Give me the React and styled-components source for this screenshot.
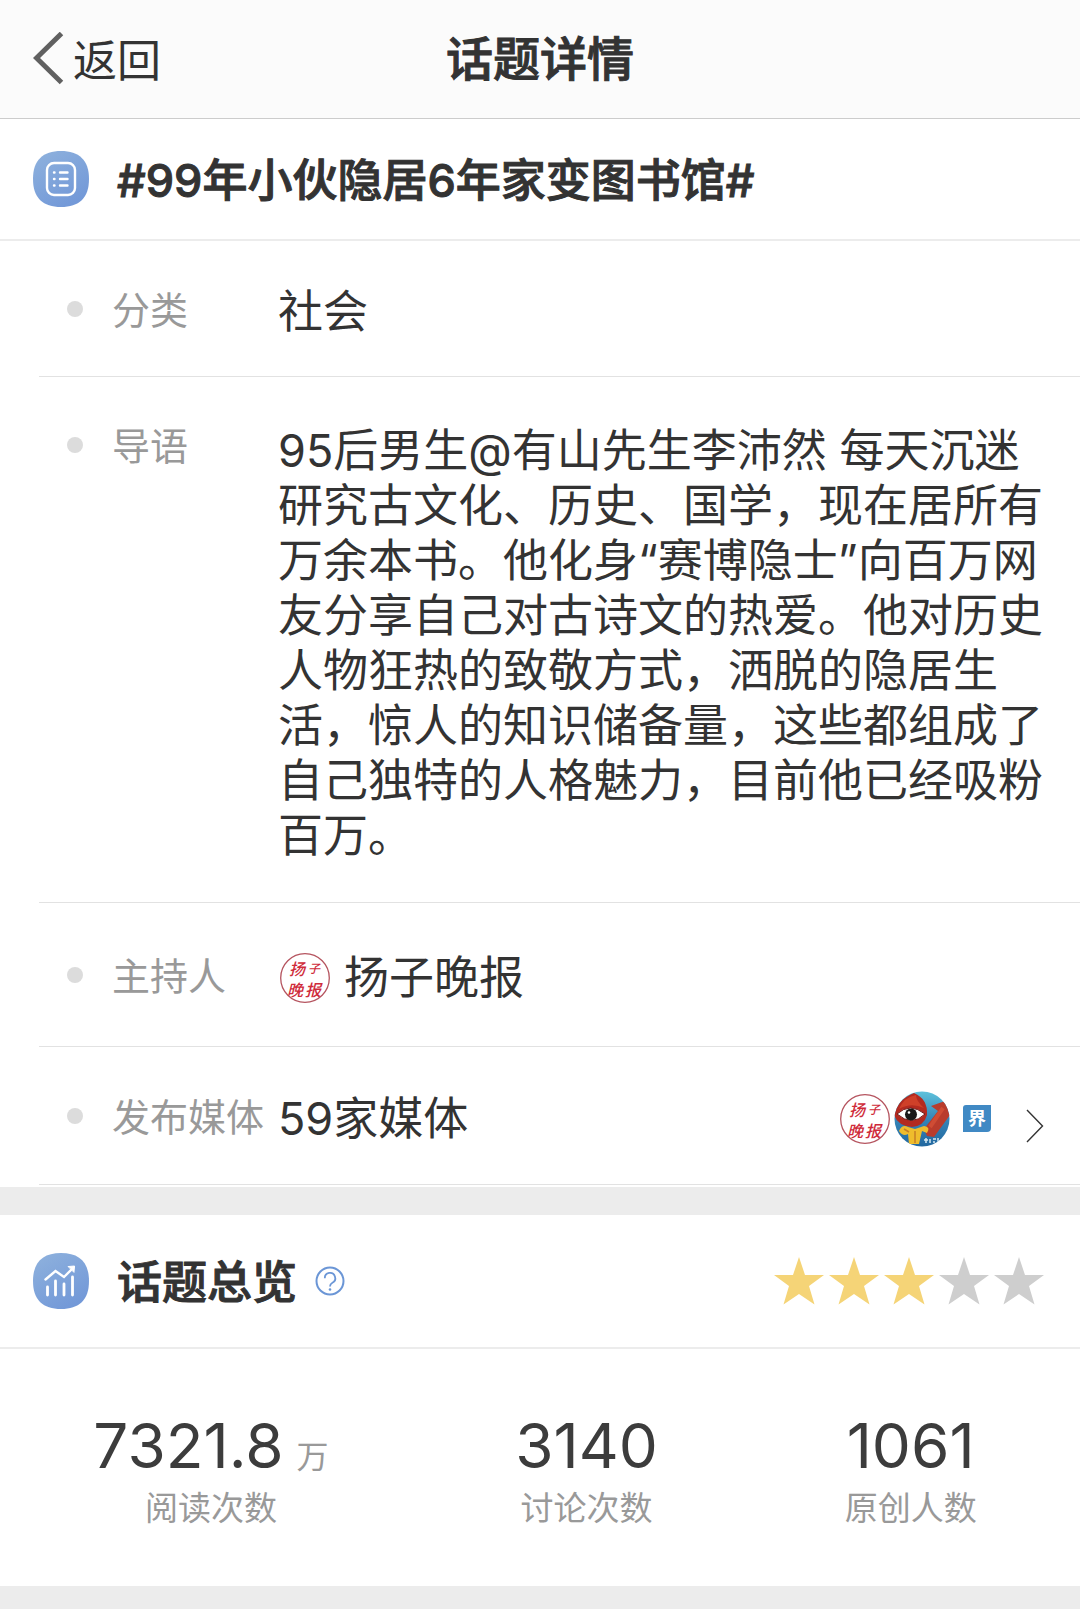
import styled, { createGlobalStyle } from "styled-components";

const GlobalStyle = createGlobalStyle`
  * {
    box-sizing: border-box;
  }
  body {
    margin: 0;
    background: #ececec;
    color: #333;
    font-family: Inter, "Noto Sans CJK SC", sans-serif;
  }
  h1, h2, dl, dt, dd, p {
    margin: 0;
    font: inherit;
  }
`;

const Header = styled.header`
  display: grid;
  grid-template-columns: 1fr auto 1fr;
  align-items: center;
  height: 119px;
  padding: 0 33px;
  background: #fbfbfb;
  border-bottom: 1px solid #ccc;
`;
const BackButton = styled.button`
  display: flex;
  align-items: center;
  justify-self: start;
  gap: 8px;
  padding: 0;
  border: none;
  background: none;
  color: #333;
  font-family: inherit;
  font-size: 44px;
  line-height: 56px;
`;
const BackText = styled.span`
  padding-top: 4px;
`;
const PageTitle = styled.h1`
  && {
    font-size: 47px;
    font-weight: 500;
    line-height: 56px;
    -webkit-text-stroke: 1px;
  }
`;

const Section = styled.section`
  padding-bottom: 2px;
  background: #fff;

  & + & {
    margin-top: 28px;
  }
`;
const SectionHead = styled.div`
  display: flex;
  align-items: center;
  gap: 28px;
  height: ${({ $tall }) => ($tall ? "134px" : "122px")};
  padding: 0 36px 0 33px;
  border-bottom: 2px solid #ececec;
`;
const TitleGroup = styled.div`
  display: flex;
  align-items: center;
  gap: 18px;
`;
const SectionTitle = styled.h2`
  && {
    padding-top: 4px;
    font-size: 45px;
    font-weight: 500;
    line-height: 56px;
    -webkit-text-stroke: 1px;
  }
`;
const HelpButton = styled.button`
  display: flex;
  padding: 0;
  border: none;
  background: none;
`;
const Stars = styled.div`
  display: flex;
  gap: 5px;
  margin-left: auto;
`;

const Row = styled.div`
  display: grid;
  grid-template-columns: 45px 166px 1fr;
  align-items: start;
  margin-left: 39px;
  padding: ${({ $space }) => `${$space + 4}px 36px ${$space}px 28px`};
  border-bottom: 1px solid #e2e2e2;
`;
const Dot = styled.span`
  width: 16px;
  height: 16px;
  margin-top: 20px;
  border-radius: 50%;
  background: #dcdcdc;
`;
const Label = styled.dt`
  && {
    color: #999;
    font-size: 38px;
    line-height: 58px;
    white-space: nowrap;
  }
`;
const Value = styled.dd`
  && {
    display: flex;
    align-items: center;
    gap: 10px;
    padding-top: 3px;
    font-size: 45px;
    line-height: 56px;
  }
`;
const Intro = styled.p`
  && {
    padding: 3px 0;
    line-height: 55px;
  }
`;
const MediaLink = styled.a`
  display: flex;
  align-items: center;
  margin-left: auto;
`;
const ArrowBox = styled.span`
  display: flex;
  margin-left: 20px;
  padding-top: 14px;
`;

const Stats = styled.dl`
  display: flex;
  justify-content: space-around;
  padding: 59px 10px 52px 0;
`;
const Stat = styled.div`
  display: flex;
  flex-direction: column-reverse;
  align-items: center;
`;
const StatName = styled.dt`
  && {
    color: #999;
    font-size: 33px;
    line-height: 48px;
  }
`;
const StatValue = styled.dd`
  && {
    display: flex;
    align-items: baseline;
    gap: 13px;
    color: #3c3c3c;
    font-size: 62px;
    line-height: 76px;
  }
`;
const Unit = styled.span`
  color: #999;
  font-size: 32px;
  line-height: 32px;
`;

function Badge({ id, children }) {
  return (
    <svg width="56" height="56" viewBox="0 0 56 56" fill="none" aria-hidden="true">
      <defs>
        <linearGradient id={id} x1="0" y1="0" x2="0.6" y2="1">
          <stop offset="0" stopColor="#8fb2dd" />
          <stop offset="1" stopColor="#7399d8" />
        </linearGradient>
      </defs>
      <path
        d="M28 0C46 0 56 9 56 28S46 56 28 56 0 47 0 28 10 0 28 0Z"
        fill={`url(#${id})`}
      />
      {children}
    </svg>
  );
}

function ListBadge() {
  return (
    <Badge id="list-badge">
      <g stroke="#fff" strokeWidth="2.4" strokeLinecap="round">
        <rect x="14" y="12" width="28" height="32" rx="7" />
        <path d="M27 21.500h7.500M27 28h7.500M27 34.500h7.500M21 21.500h.5M21 28h.5M21 34.500h.5" />
      </g>
    </Badge>
  );
}

function ChartBadge() {
  return (
    <Badge id="chart-badge">
      <g stroke="#fff" strokeWidth="2.4" strokeLinecap="round">
        <path d="M12.500 26.500l10-8.500 8.500 6L40.500 14.500" />
        <path d="M35.500 13.500l6-.5-.5 6Z" fill="#fff" strokeWidth="1" />
        <path d="M14.500 34v8M22.500 28v14M31 31v11M39.500 24v18" strokeWidth="2.800" />
      </g>
    </Badge>
  );
}

function Seal() {
  return (
    <svg width="56" height="56" viewBox="0 0 56 56" aria-hidden="true">
      <circle cx="27" cy="28" r="24.300" fill="#fff" stroke="#b5545f" strokeWidth="1.300" />
      <g
        fill="#cf2b3a"
        fontFamily="'Noto Sans CJK SC', sans-serif"
        fontSize="16"
        fontStyle="italic"
        fontWeight="500"
      >
        <text x="11" y="25">扬</text>
        <text x="30" y="23" fontSize="12">子</text>
        <text x="9" y="46">晚</text>
        <text x="27" y="46">报</text>
      </g>
    </svg>
  );
}

function EyeAvatar() {
  return (
    <svg width="56" height="56" viewBox="0 0 56 56" aria-hidden="true">
      <defs>
        <clipPath id="eye-clip">
          <circle cx="28" cy="28" r="27.500" />
        </clipPath>
        <linearGradient id="eye-sky" x1="0" y1="0" x2="0" y2="1">
          <stop offset="0" stopColor="#5fc3dc" />
          <stop offset="0.500" stopColor="#3585b8" />
          <stop offset="1" stopColor="#22679f" />
        </linearGradient>
      </defs>
      <g clipPath="url(#eye-clip)">
        <rect width="56" height="56" fill="url(#eye-sky)" />
        <path d="M30 38L44 20 37 15 51 10 56 24 40 46 33 45Z" fill="#b93c2c" />
        <path d="M36 36L49 17" stroke="#cf4c34" strokeWidth="4" />
        <path d="M0 24Q4 8 20 2Q34 8 33 24Q30 35 18 36Q4 35 0 24Z" fill="#b32a20" />
        <path d="M5 18Q10 6 22 4Q22 10 30 17Q17 11 5 18Z" fill="#cf4029" />
        <path d="M5 40Q8 33 14 36L21 38 30 35Q37 36 33 42L28 40 25 53H15L14 43Q9 46 5 40Z" fill="#efbc2c" />
        <path d="M21 40v12M15 41l-5-3" stroke="#c77f25" strokeWidth="1.500" />
        <path d="M3 23Q16 11 31 23Q18 36 3 23Z" fill="#fff" stroke="#6e1816" strokeWidth="1" />
        <circle cx="17" cy="23.500" r="6" fill="#191818" />
        <circle cx="15" cy="21.500" r="1.300" fill="#fff" />
        <path d="M30 49h4M32 47v5M36 48v4M39 48h3M40 50v2M44 47v4" stroke="#d6e8ef" strokeWidth="1.500" />
      </g>
    </svg>
  );
}

function JieAvatar() {
  return (
    <svg width="56" height="56" viewBox="0 0 56 56" aria-hidden="true">
      <path d="M16 14h25v23q0 4-4 4H13V17q0-3 3-3Z" fill="#4089c4" />
      <text
        x="27"
        y="34"
        fill="#fff"
        fontFamily="'Noto Sans CJK SC', sans-serif"
        fontSize="18"
        fontWeight="700"
        textAnchor="middle"
      >
        界
      </text>
    </svg>
  );
}

function Star({ filled }) {
  return (
    <svg width="50" height="48" viewBox="0 0 50 48" aria-hidden="true">
      <path
        d="M25 0L31 18H50L35 29 40.500 47.500 25 37 9.500 47.500 15 29 0 18H19Z"
        fill={filled ? "#f5d477" : "#cecece"}
      />
    </svg>
  );
}

const stats = [
  { name: "阅读次数", value: "7321.8", unit: "万" },
  { name: "讨论次数", value: "3140" },
  { name: "原创人数", value: "1061" },
];

function InfoRow({ label, space = 36, children }) {
  return (
    <Row $space={space}>
      <Dot />
      <Label>{label}</Label>
      <Value>{children}</Value>
    </Row>
  );
}

export default function App() {
  return (
    <>
      <GlobalStyle />
      <Header>
        <BackButton type="button">
          <svg width="32" height="54" viewBox="0 0 32 54" fill="none" aria-hidden="true">
            <path d="M28.500 1.500L3.500 26 28.500 50.500" stroke="#606060" strokeWidth="5" />
          </svg>
          <BackText>返回</BackText>
        </BackButton>
        <PageTitle>话题详情</PageTitle>
      </Header>
      <main>
        <Section>
          <SectionHead>
            <ListBadge />
            <SectionTitle>#99年小伙隐居6年家变图书馆#</SectionTitle>
          </SectionHead>
          <dl>
            <InfoRow label="分类">社会</InfoRow>
            <InfoRow label="导语">
              <Intro>
                95后男生@有山先生李沛然 每天沉迷研究古文化、历史、国学，现在居所有万余本书。他化身“赛博隐士”向百万网友分享自己对古诗文的热爱。他对历史人物狂热的致敬方式，洒脱的隐居生活，惊人的知识储备量，这些都组成了自己独特的人格魅力，目前他已经吸粉百万。
              </Intro>
            </InfoRow>
            <InfoRow label="主持人" space={40}>
              <Seal />
              扬子晚报
            </InfoRow>
            <InfoRow label="发布媒体" space={37}>
              59家媒体
              <MediaLink href="#media" aria-label="发布媒体">
                <Seal />
                <EyeAvatar />
                <JieAvatar />
                <ArrowBox>
                  <svg width="18" height="34" viewBox="0 0 18 34" fill="none" aria-hidden="true">
                    <path d="M1 1l15.500 16L1 33" stroke="#333" strokeWidth="1.400" />
                  </svg>
                </ArrowBox>
              </MediaLink>
            </InfoRow>
          </dl>
        </Section>
        <Section>
          <SectionHead $tall>
            <ChartBadge />
            <TitleGroup>
              <SectionTitle>话题总览</SectionTitle>
              <HelpButton type="button" aria-label="说明">
                <svg width="30" height="30" viewBox="0 0 30 30" fill="none" aria-hidden="true">
                  <circle cx="15" cy="15" r="13.500" stroke="#6b96d6" strokeWidth="2" />
                  <path
                    d="M9.800 12.200a5.200 5.200 0 1 1 7.600 4.500C15.500 17.700 15 18.500 15 20.500"
                    stroke="#6b96d6"
                    strokeWidth="1.800"
                  />
                  <circle cx="15" cy="23.500" r="1.300" fill="#6b96d6" />
                </svg>
              </HelpButton>
            </TitleGroup>
            <Stars role="img" aria-label="3/5">
              {[1, 2, 3, 4, 5].map((n) => (
                <Star key={n} filled={n <= 3} />
              ))}
            </Stars>
          </SectionHead>
          <Stats>
            {stats.map((stat) => (
              <Stat key={stat.name}>
                <StatName>{stat.name}</StatName>
                <StatValue>
                  {stat.value}
                  {stat.unit && <Unit>{stat.unit}</Unit>}
                </StatValue>
              </Stat>
            ))}
          </Stats>
        </Section>
      </main>
    </>
  );
}
